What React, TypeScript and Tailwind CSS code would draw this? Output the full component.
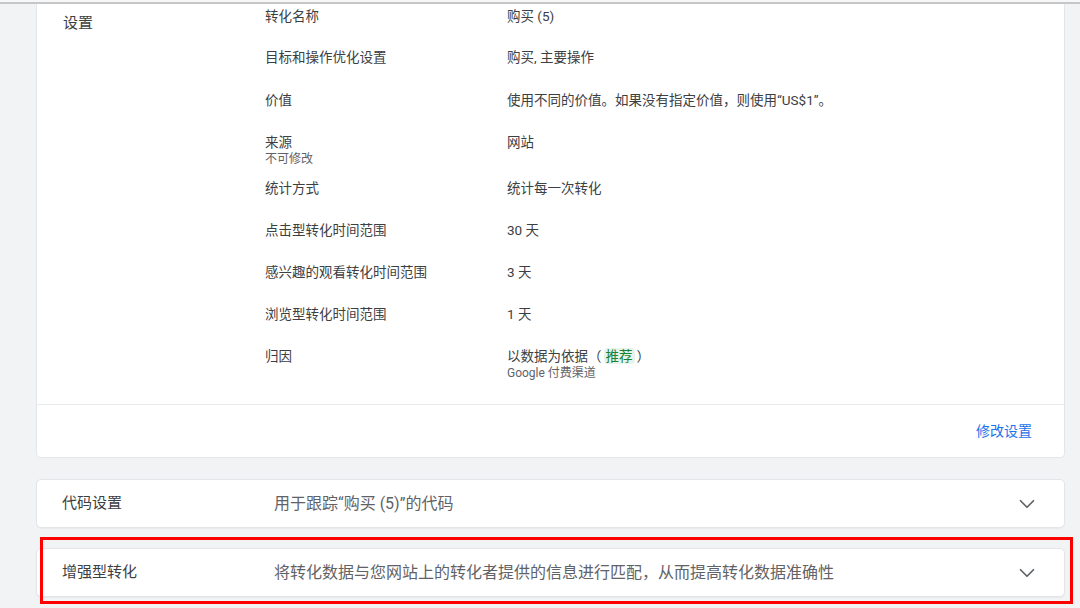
import { ChevronDown } from "lucide-react";

const FONT = { fontFamily: '"Roboto", "Noto Sans CJK SC", "Noto Sans", sans-serif' };

type Row = { label: string; sub?: string; value: React.ReactNode; valueSub?: string; h: string };

const rows: Row[] = [
  { label: "转化名称", value: "购买 (5)", h: "h-[41px]" },
  { label: "目标和操作优化设置", value: "购买, 主要操作", h: "h-[43px]" },
  { label: "价值", value: "使用不同的价值。如果没有指定价值，则使用“US$1”。", h: "h-[42px]" },
  { label: "来源", sub: "不可修改", value: "网站", h: "h-[46px]" },
  { label: "统计方式", value: "统计每一次转化", h: "h-[42px]" },
  { label: "点击型转化时间范围", value: "30 天", h: "h-[42px]" },
  { label: "感兴趣的观看转化时间范围", value: "3 天", h: "h-[42px]" },
  { label: "浏览型转化时间范围", value: "1 天", h: "h-[42px]" },
  {
    label: "归因",
    value: (
      <>
        以数据为依据（
        <span className="mx-[2px] rounded-sm bg-[#e6f4ea] px-[2px] text-[#188038]">推荐</span>
        ）
      </>
    ),
    valueSub: "Google 付费渠道",
    h: "h-[58px]",
  },
];

function CollapsedCard({ title, desc }: { title: string; desc: string }) {
  return (
    <div className="flex h-[49px] items-center rounded-[5px] border border-[#e3e5e8] bg-white shadow-[0_1px_1px_rgba(0,0,0,0.04)]">
      <div className="w-[237px] pl-[25px] text-[15px] text-[#3c4043]">{title}</div>
      <div className="flex-1 text-[16px] text-[#5f6368]">{desc}</div>
      <ChevronDown className="mr-[24px] h-[26px] w-[26px] text-[#5f6368]" strokeWidth={1.6} />
    </div>
  );
}

export default function App() {
  return (
    <div className="relative h-[608px] w-[1080px] overflow-hidden bg-[#f1f3f4]" style={FONT}>
      <div className="h-[2px] bg-[#f7f7f7]" />
      <div className="h-[2px] bg-[#c4c6c8]" />

      <div className="ml-[36px] mr-[15px]">
        {/* settings card */}
        <div className="rounded-b-[5px] border-x border-b border-[#e3e5e8] bg-white">
          <div className="flex">
            <div className="w-[228px] pl-[26px] pt-[9px] text-[15px] leading-[20px] text-[#3c4043]">设置</div>
            <div className="flex-1 pt-[2px]">
              {rows.map((r) => (
                <div key={r.label} className={`flex ${r.h}`}>
                  <div className="w-[242px]">
                    <div className="text-[13.5px] leading-[20px] text-[#3c4043]">{r.label}</div>
                    {r.sub && <div className="text-[12px] leading-[14px] text-[#5f6368]">{r.sub}</div>}
                  </div>
                  <div>
                    <div className="text-[13.5px] leading-[20px] text-[#3c4043]">{r.value}</div>
                    {r.valueSub && <div className="text-[12px] leading-[14px] text-[#5f6368]">{r.valueSub}</div>}
                  </div>
                </div>
              ))}
            </div>
          </div>
          <div className="flex h-[53px] items-center justify-end border-t border-[#e8eaed] pr-[32px]">
            <span className="text-[14px] text-[#1a73e8]">修改设置</span>
          </div>
        </div>

        <div className="mt-[21px]">
          <CollapsedCard title="代码设置" desc="用于跟踪“购买 (5)”的代码" />
        </div>
        <div className="mt-[20px]">
          <CollapsedCard title="增强型转化" desc="将转化数据与您网站上的转化者提供的信息进行匹配，从而提高转化数据准确性" />
        </div>
      </div>

      {/* annotation box */}
      <div className="absolute left-[40px] top-[537px] h-[67px] w-[1033px] border-[3px] border-[#ff0000]" />
    </div>
  );
}
